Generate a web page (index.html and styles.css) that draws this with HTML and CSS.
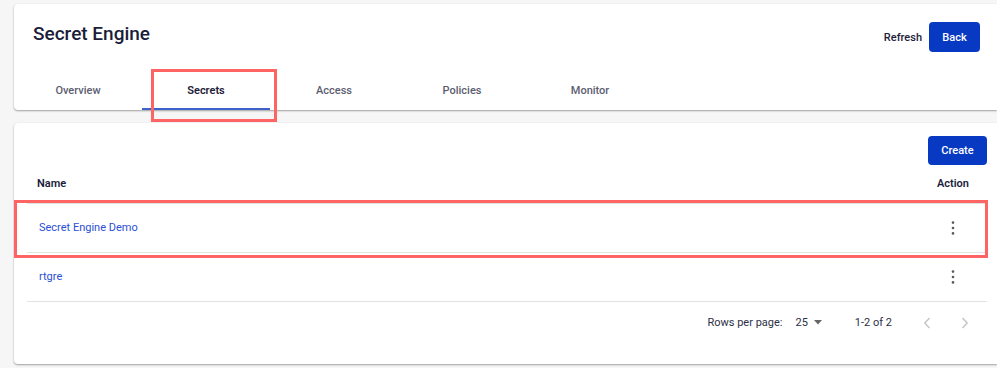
FILE: index.html
```html
<!DOCTYPE html>
<html lang="en">
<head>
  <meta charset="UTF-8" />
  <title>Secret Engine</title>
  <link rel="stylesheet" href="styles.css">
</head>
<body>
  <div class="page">
    <div class="card engine-card">
      <div class="card-head">
        <h1>Secret Engine</h1>
        <div class="head-actions">
          <button class="text-btn">Refresh</button>
          <button class="primary-btn back-btn">Back</button>
        </div>
      </div>
      <div class="tabs">
        <div class="tab">Overview</div>
        <div class="tab active">Secrets</div>
        <div class="tab">Access</div>
        <div class="tab">Policies</div>
        <div class="tab">Monitor</div>
      </div>
    </div>

    <div class="card list-card">
      <div class="toolbar">
        <button class="primary-btn create-btn">Create</button>
      </div>
      <table class="secrets">
        <thead>
          <tr>
            <th>Name</th>
            <th class="col-action">Action</th>
          </tr>
        </thead>
        <tbody>
          <tr>
            <td><a class="name-link" href="#">Secret Engine Demo</a></td>
            <td class="col-action">
              <svg class="kebab" width="16" height="16" viewBox="0 0 16 16"><circle cx="8" cy="2.6" r="1.3"/><circle cx="8" cy="8" r="1.3"/><circle cx="8" cy="13.4" r="1.3"/></svg>
            </td>
          </tr>
          <tr>
            <td><a class="name-link" href="#">rtgre</a></td>
            <td class="col-action">
              <svg class="kebab" width="16" height="16" viewBox="0 0 16 16"><circle cx="8" cy="2.6" r="1.3"/><circle cx="8" cy="8" r="1.3"/><circle cx="8" cy="13.4" r="1.3"/></svg>
            </td>
          </tr>
        </tbody>
      </table>
      <div class="pagination">
        <span class="rows-label">Rows per page:</span>
        <span class="rows-select">25
          <svg width="8" height="5" viewBox="0 0 8 5"><path d="M0 0h8L4 4.5z"/></svg>
        </span>
        <span class="range">1-2 of 2</span>
        <span class="page-btn">
          <svg width="8" height="12" viewBox="0 0 8 12"><path d="M6.5 1 1.8 6l4.7 5" fill="none" stroke-width="1.4"/></svg>
        </span>
        <span class="page-btn">
          <svg width="8" height="12" viewBox="0 0 8 12"><path d="M1.5 1 6.2 6l-4.7 5" fill="none" stroke-width="1.4"/></svg>
        </span>
      </div>
    </div>
  </div>

  <!-- annotation boxes over the screenshot -->
  <div class="mark mark-tab"></div>
  <div class="mark mark-row"></div>
</body>
</html>
```

FILE: styles.css
```css
* {
  box-sizing: border-box;
}

html, body {
  margin: 0;
  padding: 0;
  height: 100%;
}

body {
  position: relative;
  background: #f6f6f6;
  font-family: Roboto, 'Liberation Sans', sans-serif;
  color: #1c1e38;
  overflow: hidden;
}

.page {
  display: flex;
  flex-direction: column;
  gap: 13px;
  padding: 4px 0 0 14px;
}

.card {
  background: #fff;
  border-radius: 4px 0 0 4px;
  box-shadow: 0 1px 2px rgba(0, 0, 0, 0.35), 0 0 1px rgba(0, 0, 0, 0.08);
}

.card-head {
  display: flex;
  justify-content: space-between;
  align-items: center;
  padding: 18px 17px 18px 19px;
}

h1 {
  align-self: flex-start;
  margin: 0;
  font-size: 19px;
  font-weight: 500;
  line-height: 24px;
  color: #1b1d3a;
}

.head-actions {
  display: flex;
  align-items: center;
  gap: 7px;
}

button {
  font-family: inherit;
  border: none;
  cursor: pointer;
}

.text-btn {
  background: none;
  padding: 0;
  font-size: 11px;
  font-weight: 500;
  color: #1d2038;
}

.primary-btn {
  background: #0739c3;
  color: #fff;
  border-radius: 4px;
  font-size: 11px;
  font-weight: 500;
  padding: 0;
}

.back-btn {
  width: 51px;
  height: 30px;
}

.tabs {
  display: flex;
  height: 40px;
}

.tab {
  width: 128px;
  text-align: center;
  line-height: 41px;
  font-size: 11px;
  font-weight: 500;
  color: #5b5e70;
}

.tab.active {
  color: #1d2038;
  font-weight: 600;
  box-shadow: inset 0 -2px 0 #3d62cc;
}

.list-card {
  padding: 13px 10px 20px 13px;
}

.toolbar {
  display: flex;
  justify-content: flex-end;
}

.create-btn {
  width: 59px;
  height: 29px;
}

.secrets {
  width: 100%;
  border-collapse: collapse;
  font-size: 11px;
}

.secrets th {
  height: 38px;
  padding: 0 10px;
  text-align: left;
  font-weight: 600;
  color: #1b1d3a;
  border-bottom: 1px solid #e2e2e2;
}

.secrets td {
  height: 49px;
  padding: 0 12px;
  border-bottom: 1px solid #e2e2e2;
}

.secrets .col-action {
  width: 68px;
  padding: 0;
  text-align: center;
}

.name-link {
  color: #2b4fd6;
  text-decoration: none;
}

.kebab {
  display: block;
  margin: 0 auto;
  fill: #5a5a5a;
}

.pagination {
  display: flex;
  justify-content: flex-end;
  align-items: center;
  height: 42px;
  padding-right: 10px;
  font-size: 11px;
  color: #2c2f45;
}

.rows-select {
  display: flex;
  align-items: center;
  gap: 6px;
  margin-left: 13px;
}

.rows-select svg {
  fill: #666;
}

.range {
  margin-left: 33px;
  margin-right: 22px;
}

.page-btn {
  display: flex;
  align-items: center;
  justify-content: center;
  width: 25px;
  height: 25px;
}

.page-btn + .page-btn {
  margin-left: 13px;
}

.page-btn svg {
  stroke: #c4c4c4;
}

.mark {
  position: absolute;
  border: 3px solid #ff6464;
  pointer-events: none;
}

.mark-tab {
  left: 151px;
  top: 69px;
  width: 126px;
  height: 53px;
}

.mark-row {
  left: 14px;
  top: 200px;
  width: 974px;
  height: 58px;
}
```
